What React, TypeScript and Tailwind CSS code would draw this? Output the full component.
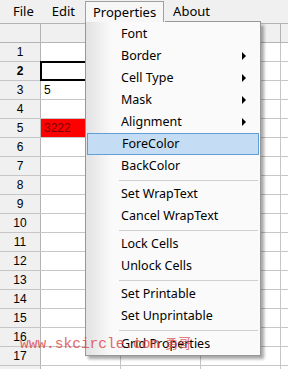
import React from "react";

const rows = Array.from({ length: 18 }, (_, i) => i + 1);

type Item = { label: string; arrow?: boolean; hot?: boolean } | "sep";

const items: Item[] = [
  { label: "Font" },
  { label: "Border", arrow: true },
  { label: "Cell Type", arrow: true },
  { label: "Mask", arrow: true },
  { label: "Alignment", arrow: true },
  { label: "ForeColor", hot: true },
  { label: "BackColor" },
  "sep",
  { label: "Set WrapText" },
  { label: "Cancel WrapText" },
  "sep",
  { label: "Lock Cells" },
  { label: "Unlock Cells" },
  "sep",
  { label: "Set Printable" },
  { label: "Set Unprintable" },
  "sep",
  { label: "Grid Properties" },
];

function DataCell({ row, col }: { row: number; col: number }) {
  const isRed = row === 5 && col === 0;
  const isSel = row === 2 && col === 0;
  return (
    <div
      className={
        "relative w-[80px] shrink-0 h-full border-r border-[#c6c6c6] flex items-center pl-[3px] text-[12px] font-['Liberation_Sans',sans-serif] " +
        (isRed ? "bg-[#ff0000] text-[#7a0000]" : "bg-white text-black")
      }
    >
      {row === 3 && col === 0 ? "5" : null}
      {isRed ? "3222" : null}
      {isSel ? <div className="absolute left-[-1px] top-[-1px] right-[-1px] bottom-[-1px] border-2 border-black" /> : null}
    </div>
  );
}

export default function App() {
  return (
    <div className="relative w-[288px] h-[369px] overflow-hidden bg-white font-['Noto_Sans',sans-serif] text-[12.5px] text-black">
      {/* Menu bar */}
      <div className="h-[23px] bg-[#f0f0f0] flex items-center text-[13px]">
        <span className="ml-[13px]">File</span>
        <span className="ml-[18px]">Edit</span>
        <span className="ml-[10px] h-[22px] mt-[1px] w-[79px] border border-b-0 border-[#a0a0a0] bg-[#f7f7f7] flex items-center justify-center">
          Properties
        </span>
        <span className="ml-[9px]">About</span>
      </div>
      {/* Grid */}
      <div className="flex flex-col">
        <div className="h-[20px] flex border-t border-b border-[#b4b4b4] bg-[#f0f0f0]">
          <div className="w-[41px] shrink-0 border-r border-[#b4b4b4]" />
          {[0, 1, 2, 3].map((c) => (
            <div key={c} className="w-[80px] shrink-0 border-r border-[#b4b4b4]" />
          ))}
        </div>
        {rows.map((r) => (
          <div key={r} className="h-[19px] flex border-b border-[#c6c6c6]">
            <div
              className={
                "w-[41px] shrink-0 bg-[#f0f0f0] border-r border-[#b4b4b4] flex items-center justify-center text-[12px] font-['Liberation_Sans',sans-serif] " +
                (r === 2 ? "font-bold" : "")
              }
            >
              {r <= 17 ? r : null}
            </div>
            {[0, 1, 2, 3].map((c) => (
              <DataCell key={c} row={r} col={c} />
            ))}
          </div>
        ))}
      </div>
      {/* Dropdown menu */}
      <div className="absolute left-[85px] top-[22px] w-[176px] h-[334px] border border-[#979797] border-t-0 bg-[#fafafa] shadow-[3px_3px_3px_rgba(0,0,0,0.35)] py-[1px] px-[1px]">
        <div className="absolute left-[79px] top-[-1px] right-[-1px] h-px bg-[#979797]" />
        <div className="absolute left-0 top-0 bottom-0 w-[26px] bg-gradient-to-r from-[#e2e2e2] to-[#fafafa]" />
        <div className="relative flex flex-col">
          {items.map((it, i) =>
            it === "sep" ? (
              <div key={i} className="h-[6px] flex items-center pl-[32px] pr-[1px]">
                <div className="h-px w-full bg-[#d0d0d0]" />
              </div>
            ) : (
              <div
                key={i}
                className={
                  "relative h-[22px] flex items-center pl-[34px] " +
                  (it.hot ? "bg-[#c4ddf4] border border-[#5d9fd8] pl-[33px]" : "")
                }
              >
                {it.label}
                {it.arrow ? (
                  <div className="absolute right-[13px] top-[7px] w-0 h-0 border-y-[4px] border-y-transparent border-l-[4px] border-l-black" />
                ) : null}
              </div>
            )
          )}
        </div>
      </div>
      {/* Watermark */}
      <div className="absolute left-[20px] top-[334px] text-[14.5px] leading-[18px] text-[#dc4e4e] opacity-85 font-['Liberation_Mono','Noto_Sans_CJK_SC',monospace] whitespace-nowrap">
        www.skcircle.com<span className="ml-[6px] font-['Noto_Sans_CJK_SC',serif] text-[13px]">勇哥</span>
      </div>
    </div>
  );
}
